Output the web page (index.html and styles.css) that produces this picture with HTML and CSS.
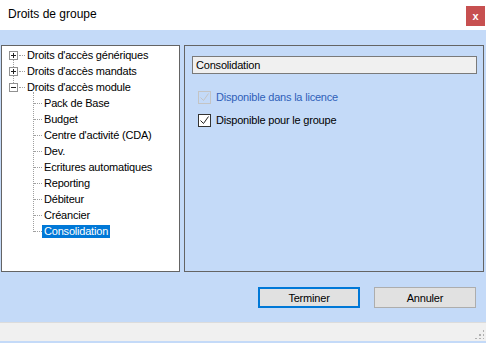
FILE: index.html
```html
<!DOCTYPE html>
<html>
<head>
<meta charset="utf-8">
<link rel="stylesheet" href="styles.css">
</head>
<body>
<div class="window">
  <div class="titlebar">
    <span class="title">Droits de groupe</span>
    <span class="close">x</span>
  </div>
  <div class="client">
    <div class="panels">
      <div class="tree">
        <div class="roots">
          <div class="row root"><span class="exp"><svg width="7" height="7" viewBox="0 0 7 7"><path d="M1 3.5h5M3.5 1v5" stroke="#222" stroke-width="1"/></svg></span><span class="dash"></span><span class="label">Droits d'accès génériques</span></div>
          <div class="row root"><span class="exp"><svg width="7" height="7" viewBox="0 0 7 7"><path d="M1 3.5h5M3.5 1v5" stroke="#222" stroke-width="1"/></svg></span><span class="dash"></span><span class="label">Droits d'accès mandats</span></div>
          <div class="row root"><span class="exp"><svg width="7" height="7" viewBox="0 0 7 7"><path d="M1 3.5h5" stroke="#222" stroke-width="1"/></svg></span><span class="dash"></span><span class="label">Droits d'accès module</span></div>
        </div>
        <div class="children">
          <div class="row child"><span class="dash"></span><span class="label">Pack de Base</span></div>
          <div class="row child"><span class="dash"></span><span class="label">Budget</span></div>
          <div class="row child"><span class="dash"></span><span class="label">Centre d'activité (CDA)</span></div>
          <div class="row child"><span class="dash"></span><span class="label">Dev.</span></div>
          <div class="row child"><span class="dash"></span><span class="label">Ecritures automatiques</span></div>
          <div class="row child"><span class="dash"></span><span class="label">Reporting</span></div>
          <div class="row child"><span class="dash"></span><span class="label">Débiteur</span></div>
          <div class="row child"><span class="dash"></span><span class="label">Créancier</span></div>
          <div class="row child"><span class="dash"></span><span class="label selected">Consolidation</span></div>
        </div>
      </div>
      <div class="details">
        <div class="field">Consolidation</div>
        <div class="check disabled"><span class="box"><svg width="11" height="11" viewBox="0 0 11 11"><path d="M1.5 5.5l3 3l5-7" fill="none" stroke="#c4c4c4" stroke-width="1"/></svg></span><span class="clabel">Disponible dans la licence</span></div>
        <div class="check"><span class="box"><svg width="11" height="11" viewBox="0 0 11 11"><path d="M1.5 5.5l3 3l5-7" fill="none" stroke="#222" stroke-width="1"/></svg></span><span class="clabel">Disponible pour le groupe</span></div>
      </div>
    </div>
    <div class="buttons">
      <button class="btn default">Terminer</button>
      <button class="btn">Annuler</button>
    </div>
  </div>
  <div class="statusbar"><span class="grip"></span></div>
  <div class="bottomline"></div>
</div>
</body>
</html>
```

FILE: styles.css
```css
html, body {
  margin: 0;
  padding: 0;
  background: #c4daf8;
}
body {
  font-family: "Liberation Sans", Arial, sans-serif;
  font-size: 11px;
  letter-spacing: -0.2px;
  color: #000;
}
.window {
  width: 486px;
  height: 343px;
  display: flex;
  flex-direction: column;
}
.titlebar {
  height: 30px;
  background: #fff;
  display: flex;
  align-items: center;
  justify-content: space-between;
  padding-left: 8px;
  box-sizing: border-box;
}
.title {
  font-family: "Liberation Sans", Arial, sans-serif;
  font-size: 12px;
  letter-spacing: 0;
  margin-top: -2px;
}
.close {
  width: 19px;
  height: 20px;
  background: #c75050;
  color: #fff;
  font-family: "Liberation Sans", Arial, sans-serif;
  font-size: 11px;
  font-weight: bold;
  display: flex;
  align-items: center;
  justify-content: center;
  margin-right: 1px;
  margin-top: 2px;
}
.client {
  height: 292px;
  padding: 15px 0 0 1px;
  box-sizing: border-box;
}
.panels {
  display: flex;
  gap: 4px;
  height: 227px;
}
.tree {
  width: 179px;
  height: 227px;
  box-sizing: border-box;
  background: #fff;
  border: 1px solid #646464;
  padding-top: 1px;
}
.roots {
  position: relative;
}
.roots::before {
  content: "";
  position: absolute;
  left: 11px;
  top: 8px;
  height: 32px;
  border-left: 1px dotted #a0a0a0;
}
.row {
  height: 16px;
  display: flex;
  align-items: center;
  position: relative;
}
.exp {
  margin-left: 7px;
  width: 9px;
  height: 9px;
  box-sizing: border-box;
  border: 1px solid #919191;
  background: #fff;
  display: flex;
  align-items: center;
  justify-content: center;
  position: relative;
  z-index: 1;
}
.exp svg {
  display: block;
}
.root .dash {
  width: 6px;
  margin-left: 1px;
  border-top: 1px dotted #a0a0a0;
}
.children {
  position: relative;
}
.children::before {
  content: "";
  position: absolute;
  left: 31px;
  top: -3px;
  height: 140px;
  border-left: 1px dotted #a0a0a0;
}
.child {
  padding-left: 32px;
}
.child .dash {
  width: 8px;
  border-top: 1px dotted #a0a0a0;
}
.label {
  padding: 0 2px;
  height: 13px;
  line-height: 13px;
  white-space: nowrap;
}
.label.selected {
  background: #0078d7;
  color: #fff;
}
.details {
  width: 300px;
  height: 227px;
  box-sizing: border-box;
  border: 1px solid #646464;
  padding: 10px 0 0 7px;
}
.field {
  width: 285px;
  height: 18px;
  box-sizing: border-box;
  border: 1px solid #7a7a7a;
  background: #f0f0f0;
  padding-left: 3px;
  line-height: 16px;
}
.check {
  display: flex;
  align-items: center;
  height: 16px;
  margin-left: 6px;
}
.check.disabled {
  margin-top: 15px;
  margin-bottom: 7px;
}
.box {
  width: 13px;
  height: 13px;
  box-sizing: border-box;
  border: 1px solid #333;
  background: #fff;
  display: flex;
  align-items: center;
  justify-content: center;
}
.box svg {
  display: block;
}
.disabled .box {
  border-color: #c4c4c4;
  background: #c4daf8;
}
.clabel {
  margin-left: 5px;
}
.disabled .clabel {
  color: #2f5fb8;
}
.buttons {
  display: flex;
  justify-content: flex-end;
  gap: 14px;
  padding-right: 10px;
  margin-top: 15px;
}
.btn {
  width: 102px;
  height: 21px;
  box-sizing: border-box;
  background: #e1e1e1;
  border: 1px solid #adadad;
  font-family: "Liberation Sans", Arial, sans-serif;
  font-size: 11px;
  letter-spacing: -0.2px;
  color: #000;
  padding: 0;
}
.btn.default {
  border: 2px solid #0078d7;
}
.statusbar {
  height: 19px;
  background: #f0f0f0;
  border-top: 1px solid #dcdcdc;
  box-sizing: border-box;
  display: flex;
  justify-content: flex-end;
  align-items: flex-end;
}
.grip {
  width: 10px;
  height: 10px;
  margin: 0 2px 2px 0;
  background-image: radial-gradient(circle, #b0b0b0 1px, transparent 1px);
  background-size: 4px 4px;
  clip-path: polygon(100% 0, 100% 100%, 0 100%);
}
.bottomline {
  height: 2px;
  background: #c4daf8;
}
```
